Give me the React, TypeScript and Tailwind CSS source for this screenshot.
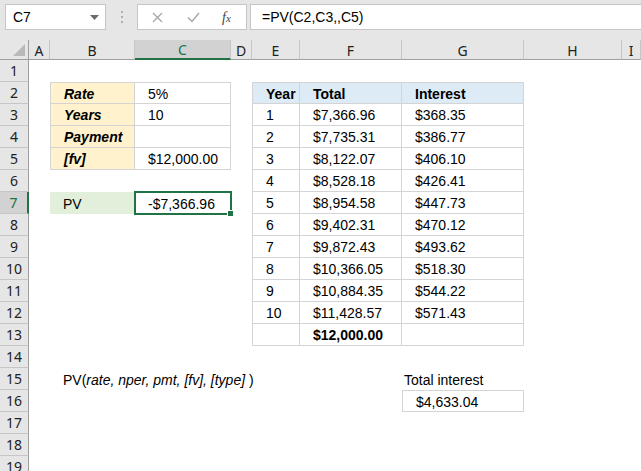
import React from "react";

type C = { t?: React.ReactNode; cls?: string; sel?: boolean };

const cols = ["A", "B", "C", "D", "E", "F", "G", "H", "I"];

const lbl = "bg-[#fff2cc] font-bold italic";
const hd = "bg-[#ddebf7] font-bold";

// row -> column index -> cell
const data: Record<number, Record<number, C>> = {
  2: { 1: { t: "Rate", cls: lbl }, 2: { t: "5%" }, 4: { t: "Year", cls: hd }, 5: { t: "Total", cls: hd }, 6: { t: "Interest", cls: hd } },
  3: { 1: { t: "Years", cls: lbl }, 2: { t: "10" }, 4: { t: "1" }, 5: { t: "$7,366.96" }, 6: { t: "$368.35" } },
  4: { 1: { t: "Payment", cls: lbl }, 2: {}, 4: { t: "2" }, 5: { t: "$7,735.31" }, 6: { t: "$386.77" } },
  5: { 1: { t: "[fv]", cls: lbl }, 2: { t: "$12,000.00" }, 4: { t: "3" }, 5: { t: "$8,122.07" }, 6: { t: "$406.10" } },
  6: { 4: { t: "4" }, 5: { t: "$8,528.18" }, 6: { t: "$426.41" } },
  7: { 1: { t: "PV", cls: "bg-[#e2efda]" }, 2: { t: "-$7,366.96", sel: true }, 4: { t: "5" }, 5: { t: "$8,954.58" }, 6: { t: "$447.73" } },
  8: { 4: { t: "6" }, 5: { t: "$9,402.31" }, 6: { t: "$470.12" } },
  9: { 4: { t: "7" }, 5: { t: "$9,872.43" }, 6: { t: "$493.62" } },
  10: { 4: { t: "8" }, 5: { t: "$10,366.05" }, 6: { t: "$518.30" } },
  11: { 4: { t: "9" }, 5: { t: "$10,884.35" }, 6: { t: "$544.22" } },
  12: { 4: { t: "10" }, 5: { t: "$11,428.57" }, 6: { t: "$571.43" } },
  13: { 4: {}, 5: { t: "$12,000.00", cls: "font-bold" }, 6: {} },
  15: {
    1: {
      t: (
        <>
          PV(<i>rate, nper, pmt, [fv], [type]</i>&nbsp;)
        </>
      ),
    },
    6: { t: "Total interest", cls: "!pl-[2px]" },
  },
  16: { 6: { t: "$4,633.04" } },
};

function borderCls(r: number, c: number) {
  // left table B2:C5, right table E2:G13, box G16
  if (r >= 2 && r <= 5 && c >= 1 && c <= 2) {
    if (r === 2 && c === 1) return "border-t border-l border-r border-b";
    if (r === 2) return "border-t border-r border-b";
    if (c === 1) return "border-l border-r border-b";
    return "border-r border-b";
  }
  if (r >= 2 && r <= 13 && c >= 4 && c <= 6) {
    if (r === 2 && c === 4) return "border-t border-l border-r border-b";
    if (r === 2) return "border-t border-r border-b";
    if (c === 4) return "border-l border-r border-b";
    return "border-r border-b";
  }
  if (r === 16 && c === 6) return "border";
  return "";
}

function Cell({ r, c }: { r: number; c: number }) {
  const cell = data[r]?.[c];
  const b = borderCls(r, c);
  return (
    <div
      className={`relative flex items-center whitespace-nowrap pl-[13px] pt-[2px] border-[#d4d4d4] ${b} ${cell?.cls ?? ""}`}
    >
      {cell?.t}
      {cell?.sel && (
        <div className="absolute -left-[1px] -top-[1px] -right-[1px] -bottom-[1px] border-2 border-[#217346]">
          <div className="absolute -bottom-[4px] -right-[4px] h-[7px] w-[7px] border border-white bg-[#217346]" />
        </div>
      )}
    </div>
  );
}

export default function App() {
  const rows = Array.from({ length: 19 }, (_, i) => i + 1);
  return (
    <div className="h-[471px] w-[641px] overflow-hidden bg-white font-['Liberation_Sans',sans-serif] text-[14px] text-black">
      {/* formula bar */}
      <div className="flex h-[40px] items-start bg-[#e6e6e6] pt-[4px]">
        <div className="ml-[5px] flex h-[26px] w-[101px] items-center justify-between border border-[#c6c6c6] bg-white pl-[7px] pr-[6px] text-[14px]">
          <span>C7</span>
          <svg width="9" height="5" viewBox="0 0 9 5">
            <path d="M0 0h9L4.5 5z" fill="#6b6b6b" />
          </svg>
        </div>
        <div className="flex h-[26px] w-[31px] flex-col items-center justify-center gap-[3px]">
          <span className="h-[2px] w-[2px] bg-[#b0b0b0]" />
          <span className="h-[2px] w-[2px] bg-[#b0b0b0]" />
          <span className="h-[2px] w-[2px] bg-[#b0b0b0]" />
        </div>
        <div className="flex h-[26px] w-[110px] items-center border border-[#c6c6c6] bg-white">
          <svg className="ml-[14px]" width="11" height="11" viewBox="0 0 11 11">
            <path d="M1 1l9 9M10 1l-9 9" stroke="#a6a6a6" strokeWidth="1.3" />
          </svg>
          <svg className="ml-[24px]" width="13" height="11" viewBox="0 0 13 11">
            <path d="M1 5.5l4 4L12 1" stroke="#a6a6a6" strokeWidth="1.4" fill="none" />
          </svg>
          <span className="ml-[22px] font-['Liberation_Serif',serif] text-[14px] italic text-[#444]">
            f<span className="text-[11px]">x</span>
          </span>
        </div>
        <div className="ml-[3px] flex h-[26px] flex-1 items-center border border-r-0 border-[#c6c6c6] bg-white pl-[11px] text-[14px]">
          =PV(C2,C3,,C5)
        </div>
      </div>

      {/* sheet */}
      <div className="grid grid-cols-[29px_21px_85px_96px_21px_48px_102px_122px_98px_1fr] grid-rows-[20px] auto-rows-[22px]">
        {/* corner */}
        <div className="relative border-b border-r border-[#9e9e9e] bg-[#e6e6e6]">
          <svg className="absolute bottom-[3px] right-[3px]" width="12" height="12" viewBox="0 0 12 12">
            <path d="M12 0v12H0z" fill="#b9b9b9" />
          </svg>
        </div>
        {cols.map((c) =>
          c === "C" ? (
            <div
              key={c}
              className="flex items-center justify-center border-b-2 border-r border-b-[#217346] border-r-[#c6c6c6] bg-[#d2d2d2] pt-[1px] font-['Noto_Sans',sans-serif] text-[14px] text-[#217346]"
            >
              {c}
            </div>
          ) : (
            <div
              key={c}
              className="flex items-center justify-center border-b border-r border-b-[#9e9e9e] border-r-[#c6c6c6] bg-[#e6e6e6] pt-[1px] font-['Noto_Sans',sans-serif] text-[14px] text-[#222]"
            >
              {c}
            </div>
          )
        )}
        {rows.map((r) => (
          <React.Fragment key={r}>
            {r === 7 ? (
              <div className="flex items-center justify-center border-b border-r-2 border-b-[#c6c6c6] border-r-[#217346] bg-[#d2d2d2] font-['Noto_Sans',sans-serif] text-[14px] text-[#217346]">
                {r}
              </div>
            ) : (
              <div className="flex items-center justify-center border-b border-r border-b-[#c6c6c6] border-r-[#9e9e9e] bg-[#e6e6e6] font-['Noto_Sans',sans-serif] text-[14px] text-[#222]">
                {r}
              </div>
            )}
            {cols.map((_, c) => (
              <Cell key={c} r={r} c={c} />
            ))}
          </React.Fragment>
        ))}
      </div>
    </div>
  );
}
